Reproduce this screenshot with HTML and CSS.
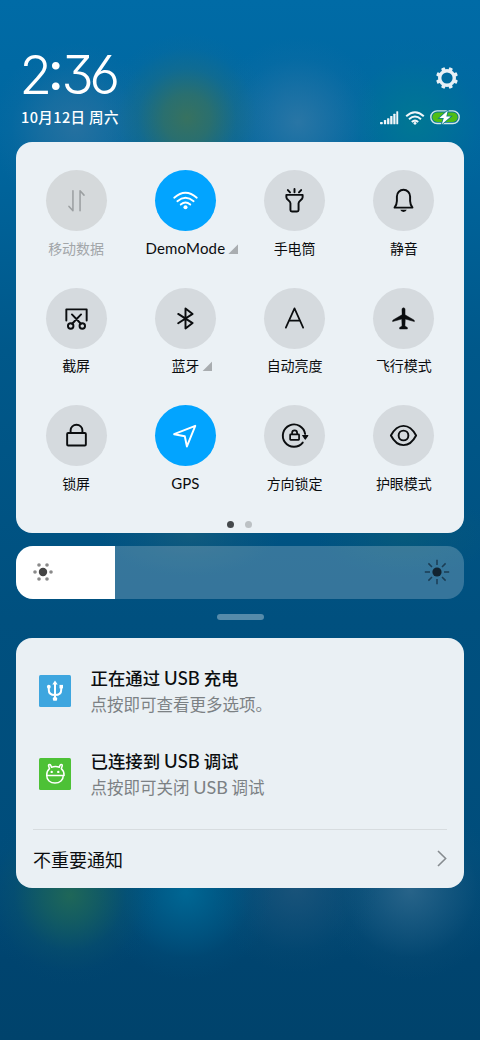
FILE: index.html
```html
<!DOCTYPE html>
<html lang="zh-CN">
<head>
<meta charset="utf-8">
<title>控制中心</title>
<link rel="stylesheet" href="styles.css">
</head>
<body>
<div class="screen">
  <header class="header">
    <div>
      <div class="clock">2<span class="colon">:</span>36</div>
      <div class="date">10月12日 周六</div>
    </div>
    <div class="header-right">
      <svg class="gear" width="24" height="24" viewBox="-12 -12 24 24">
        <g fill="#e8f0f5">
          <path fill-rule="evenodd" d="M0-9a9 9 0 1 0 0 18a9 9 0 1 0 0-18zM0-5.6a5.6 5.6 0 1 1 0 11.2a5.6 5.6 0 1 1 0-11.2z"/>
          <g id="teeth" transform="rotate(22.5)"><rect x="-1.9" y="-11" width="3.8" height="4" rx=".9"/><rect x="-1.9" y="7" width="3.8" height="4" rx=".9"/><rect x="-11" y="-1.9" width="4" height="3.8" rx=".9"/><rect x="7" y="-1.9" width="4" height="3.8" rx=".9"/></g>
          <use href="#teeth" transform="rotate(45)"/>
        </g>
      </svg>
      <div class="status">
        <svg width="19" height="14" viewBox="0 0 19 14" fill="#f2f7fa"><rect x="0" y="11" width="2.8" height="2.3" rx=".7"/><rect x="3.9" y="9" width="2.3" height="4.3" rx=".5"/><rect x="7.1" y="7.2" width="2.3" height="6.1" rx=".5"/><rect x="10.2" y="5" width="2.3" height="8.3" rx=".5"/><rect x="13.3" y="2.8" width="2.2" height="10.5" rx=".5"/><rect x="16.3" y=".3" width="1.9" height="13" rx=".5"/></svg>
        <svg width="20" height="14" viewBox="0 0 20 14" fill="none" stroke="#f2f7fa" stroke-width="2"><path d="M1.2 5.2Q10-2.7 18.8 5.2M4 8.2Q10 2.9 16 8.2M6.8 11Q10 8.3 13.2 11"/><circle cx="10" cy="12.3" r="1.4" fill="#f2f7fa" stroke="none"/></svg>
        <svg width="30" height="15" viewBox="0 0 30 15"><rect x=".8" y=".9" width="28.4" height="12.6" rx="6.3" fill="none" stroke="#d3e8e8" stroke-width="1.4"/><rect x="2.4" y="2.4" width="25.2" height="9.6" rx="4.8" fill="#50bd14"/><path d="M17.8.6L9.4 8h4.4l-2 6.2L20.8 6.4h-4.5z" fill="#fff" stroke="#087b90" stroke-width="1.5" paint-order="stroke"/></svg>
      </div>
    </div>
  </header>

  <main class="panel">
    <div class="tiles">
      <div class="tile off"><div class="disc"><svg viewBox="0 0 60 60"><path d="M26.500 20.500v19.500L22.600 35.800M33.500 40V20.500L37.400 24.700"/></svg></div><div class="label">移动数据</div></div>
      <div class="tile on"><div class="disc"><svg viewBox="0 0 60 60"><path d="M18.900 27.300Q30 17.600 41.100 27.300M22 30.700Q30 23.900 38 30.700M25.300 34Q30 30 34.700 34" stroke-width="1.800"/><circle cx="30" cy="36.600" r="2" fill="#fff" stroke="none"/></svg></div><div class="label more"><span class="latin wide">DemoMode</span></div></div>
      <div class="tile"><div class="disc"><svg viewBox="0 0 60 60"><path d="M22 24.500h16v2.200c0 2.800-4 3.200-4 6v6.600q0 1.500-1.500 1.500h-5q-1.500 0-1.500-1.500v-6.600c0-2.800-4-3.200-4-6zM30 22v-3.300M25.600 22l-2.100-2.300M34.400 22l2.100-2.300"/></svg></div><div class="label">手电筒</div></div>
      <div class="tile"><div class="disc"><svg viewBox="0 0 60 60"><path d="M21.200 37h17.600q-2.300-3.300-2.300-6.500v-4.500a6.500 6.500 0 0 0-13 0v4.500q0 3.200-2.300 6.500z"/><path d="M26.800 39.200h6.400q-.8 2-3.200 2t-3.200-2z" fill="#0b0d0f" stroke="none"/></svg></div><div class="label">静音</div></div>

      <div class="tile"><div class="disc"><svg viewBox="0 0 60 60"><path d="M20 32V21h20v11M25.500 26l8.800 9.200M34.500 26l-8.800 9.200"/><circle cx="24.300" cy="37.300" r="2.700"/><circle cx="35.700" cy="37.300" r="2.700"/></svg></div><div class="label">截屏</div></div>
      <div class="tile"><div class="disc"><svg viewBox="0 0 60 60"><path d="M22.800 25.500L37 34.500l-7 5.300V20.200l7 5.300-14.200 9.200"/></svg></div><div class="label more">蓝牙</div></div>
      <div class="tile"><div class="disc"><svg viewBox="0 0 60 60"><path d="M21.500 39L30 20l8.500 19M24.700 32.200h10.600" stroke-width="1.700"/></svg></div><div class="label">自动亮度</div></div>
      <div class="tile"><div class="disc"><svg viewBox="0 0 60 60"><path d="M28.500 21a1.500 1.500 0 0 1 3 0v5.400l8.700 5q.5.400.5 1v.6l-9-2.500-.3 6.900 2.400 1.500v1.400h-7.600v-1.400l2.400-1.500-.3-6.900-9 2.500v-.6q0-.6.500-1l8.700-5z" fill="#0b0d0f" stroke-width=".5"/></svg></div><div class="label">飞行模式</div></div>

      <div class="tile"><div class="disc"><svg viewBox="0 0 60 60"><rect x="20.800" y="27.500" width="18.400" height="12.300" rx="1"/><path d="M24.200 27v-2.200a5.800 5.300 0 0 1 11.600 0V27"/></svg></div><div class="label">锁屏</div></div>
      <div class="tile on"><div class="disc"><svg viewBox="0 0 60 60"><path d="M39.600 20.500L18.800 28.700l10.500 2.100 2.100 10z"/></svg></div><div class="label"><span class="latin gps">GPS</span></div></div>
      <div class="tile"><div class="disc"><svg viewBox="0 0 60 60"><path d="M38.100 37A11 11 0 1 1 40.400 28.500"/><path d="M38 30h5.200l-2.600 3.600z" fill="#0b0d0f" stroke-width="1"/><rect x="25.700" y="29" width="8.800" height="5.300" rx=".5" stroke-width="1.700"/><path d="M27.600 28.500v-1a2.500 2.500 0 0 1 5 0v1" stroke-width="1.700"/></svg></div><div class="label">方向锁定</div></div>
      <div class="tile"><div class="disc"><svg viewBox="0 0 60 60"><path d="M17.600 30q5-9.500 12.400-9.500t12.400 9.500q-5 9.500-12.400 9.500t-12.400-9.500z"/><circle cx="30" cy="30" r="4.800"/></svg></div><div class="label">护眼模式</div></div>
    </div>
    <div class="pager"><i class="current"></i><i></i></div>
  </main>

  <div class="slider">
    <div class="slider-fill"><svg width="22" height="22" viewBox="-11 -11 22 22"><circle r="4.200" fill="#454545"/><g fill="#8a8a8a"><circle cx="-8" r="1.800"/><circle cx="8" r="1.800"/><circle cx="-4" cy="-7" r="1.800"/><circle cx="4" cy="-7" r="1.800"/><circle cx="-4" cy="7" r="1.800"/><circle cx="4" cy="7" r="1.800"/></g></svg></div>
    <svg width="26" height="26" viewBox="-13 -13 26 26"><circle r="4.600" fill="#122330"/><path d="M0-7v-5.200M0 7v5.200M-7 0h-5.200M7 0h5.200M-5-5l-3.600-3.600M5 5l3.600 3.600M-5 5l-3.600 3.600M5-5l3.600-3.600" stroke="#1b3d54" stroke-width="1.500"/></svg>
  </div>
  <div class="handle"></div>

  <section class="notices">
    <div class="notice">
      <svg class="app" width="32" height="32" viewBox="0 0 32 32"><rect width="32" height="32" rx="1.500" fill="#3ea6df"/><g fill="none" stroke="#fff" stroke-width="2"><path d="M16 9v15M9.800 12.500v2.500q0 5 6.200 5t6.200-5v-3.500"/></g><path d="M16 5.600l2.700 4h-5.400z" fill="#fff"/><circle cx="9.800" cy="11.700" r="1.900" fill="#fff"/><rect x="20.500" y="9.900" width="3.500" height="3.500" fill="#fff"/><rect x="13.900" y="22.300" width="4.200" height="3.500" rx="1" fill="#fff"/></svg>
      <div><h2>正在通过 <span class="latin">USB</span> 充电</h2><p>点按即可查看更多选项。</p></div>
    </div>
    <div class="notice">
      <svg class="app" width="32" height="32" viewBox="0 0 32 32"><rect width="32" height="32" rx="1.500" fill="#4dc136"/><g fill="none" stroke="#fff" stroke-width="1.500" stroke-linecap="round" stroke-linejoin="round"><path d="M7.700 17.400h16.600c0 4.500-3.500 7.700-8.300 7.700s-8.300-3.200-8.300-7.700c0-2.900 1-5.200 2.800-6.700l-.9-2.600q-.3-1.500.8-1.500t1.500 1l.6 1.600q3.900-1.500 7.800 0l.6-1.600q.4-1 1.500-1t.8 1.500l-.9 2.600c1.800 1.500 2.800 3.800 2.800 6.700"/></g><circle cx="12.700" cy="13.900" r="1.200" fill="#fff"/><circle cx="19.300" cy="13.900" r="1.200" fill="#fff"/></svg>
      <div><h2>已连接到 <span class="latin">USB</span> 调试</h2><p>点按即可关闭 <span class="latin">USB</span> 调试</p></div>
    </div>
    <div class="minor"><span>不重要通知</span><svg width="10" height="17" viewBox="0 0 10 17"><path d="M1 1l7.600 7.500L1 16" fill="none" stroke="#868b8f" stroke-width="1.600"/></svg></div>
  </section>
</div>
</body>
</html>
```
FILE: styles.css
```css
* { box-sizing: border-box; }
body { margin: 0; }
.screen {
  width: 480px;
  height: 1040px;
  overflow: hidden;
  padding: 0 16px;
  display: flex;
  flex-direction: column;
  font-family: "Noto Sans CJK SC", sans-serif;
  color: #0b0d0f;
  background:
    radial-gradient(circle 85px at 187px 118px, rgba(58,114,92,.95), rgba(58,114,92,.72) 28%, rgba(48,112,112,.32) 58%, rgba(40,110,130,.08) 82%, transparent),
    radial-gradient(circle 85px at 298px 122px, rgba(48,120,166,.85), rgba(44,118,166,.5) 40%, rgba(40,115,165,.12) 75%, transparent),
    radial-gradient(circle 85px at 75px 128px, rgba(46,115,160,.8), rgba(44,115,160,.5) 40%, rgba(40,112,160,.12) 75%, transparent),
    radial-gradient(circle 85px at 415px 122px, rgba(0,122,145,.85), rgba(0,120,147,.5) 40%, rgba(0,115,152,.12) 75%, transparent),
    radial-gradient(ellipse 90px 42px at 190px 535px, rgba(24,94,124,.7), rgba(24,94,124,.3) 50%, transparent),
    radial-gradient(ellipse 90px 42px at 405px 535px, rgba(10,92,120,.7), rgba(10,92,120,.3) 50%, transparent),
    radial-gradient(circle 90px at 70px 895px, rgba(31,103,88,1), rgba(26,99,92,.72) 30%, rgba(16,88,104,.3) 62%, rgba(10,80,110,.07) 85%, transparent),
    radial-gradient(circle 88px at 186px 892px, rgba(0,103,148,1), rgba(0,100,145,.6) 36%, rgba(0,90,135,.14) 75%, transparent),
    radial-gradient(circle 85px at 296px 888px, rgba(28,84,122,.9), rgba(26,82,120,.5) 40%, rgba(20,80,115,.12) 75%, transparent),
    radial-gradient(circle 90px at 410px 890px, rgba(42,101,138,.95), rgba(36,96,133,.55) 40%, rgba(25,86,122,.13) 75%, transparent),
    linear-gradient(#006ba6 0, #0067a0 130px, #00588a 350px, #00507f 620px, #004d7b 850px, #00446f 960px, #00436c 1040px);
}
.header {
  height: 142px;
  padding: 0 3px 0 5px;
  display: flex;
  justify-content: space-between;
  flex: none;
  color: #fff;
}
.clock {
  margin: 45px 0 0 -1.500px;
  height: 59px;
  font: 300 53px/60px Inter, Lato, sans-serif;
  font-feature-settings: "cv03", "cv09";
  letter-spacing: -4.200px;
}
.colon {
  font-weight: 500;
  line-height: 1;
  vertical-align: 4px;
  letter-spacing: -2.500px;
}
.date {
  height: 26px;
  font-size: 14.5px;
  line-height: 26px;
  font-weight: 500;
  letter-spacing: .4px;
  white-space: nowrap;
}
.header-right {
  padding-top: 66px;
  display: flex;
  flex-direction: column;
  align-items: flex-end;
}
.gear { margin-right: 2px; }
.status {
  margin-top: 20px;
  margin-right: 1px;
  display: flex;
  align-items: center;
  gap: 5.500px;
}
.panel {
  height: 391px;
  flex: none;
  border-radius: 16px;
  padding: 28.300px 5.500px 0;
  background: #ebf1f5;
}
.tiles {
  display: grid;
  grid-template-columns: repeat(4, 1fr);
  grid-auto-rows: 117.300px;
}
.tile {
  display: flex;
  flex-direction: column;
  align-items: center;
}
.disc {
  width: 61px;
  height: 61px;
  border-radius: 50%;
  background: #d5dade;
}
.disc svg {
  display: block;
  width: 61px;
  height: 61px;
  fill: none;
  stroke: #0b0d0f;
  stroke-width: 1.900;
  stroke-linecap: round;
  stroke-linejoin: round;
}
.on .disc { background: #02a4ff; }
.on svg { stroke: #fff; }
.off .disc { background: #d5d9db; }
.off svg { stroke: #9b9fa1; stroke-width: 1.500; }
.off .label { color: #a2a6a9; }
.label {
  height: 24px;
  margin-top: 4.700px;
  display: flex;
  font-size: 14px;
  line-height: 24px;
  white-space: nowrap;
}
.more::after {
  content: "";
  width: 10px;
  height: 10px;
  margin: 8px -13px 0 3px;
  background: #a9adb0;
  clip-path: polygon(100% 0, 100% 100%, 0 100%);
}
.latin { font-family: Lato, sans-serif; }
.wide { font-size: 15px; letter-spacing: .2px; }
.gps { font-size: 15px; }
.pager {
  margin-top: -1.500px;
  margin-right: 1px;
  display: flex;
  justify-content: center;
  gap: 11px;
}
.pager i {
  width: 7px;
  height: 7px;
  border-radius: 50%;
  background: #bcc1c4;
}
.pager .current { background: #45494c; }
.slider {
  height: 53.500px;
  margin-top: 12.500px;
  flex: none;
  border-radius: 17px;
  overflow: hidden;
  display: flex;
  align-items: center;
  justify-content: space-between;
  padding-right: 14px;
  background: rgba(255,255,255,.21);
}
.slider-fill {
  width: 98.800px;
  height: 54px;
  padding-left: 15.500px;
  display: flex;
  align-items: center;
  background: #fff;
}
.handle {
  width: 47px;
  height: 6px;
  flex: none;
  margin: 15px 200.500px 17.500px;
  border-radius: 3px;
  background: #568baa;
}
.notices {
  height: 250.500px;
  flex: none;
  border-radius: 16px;
  padding: 25px 17px 0;
  background: #eaf0f4;
}
.notice {
  height: 83px;
  padding-left: 6px;
  display: flex;
  gap: 19.500px;
}
.app { margin-top: 12.500px; flex: none; }
.notice h2, .notice p {
  margin: 0;
  font-size: 17.400px;
  line-height: 30px;
  white-space: nowrap;
}
.notice h2 { font-weight: 500; }
.notice h2 .latin { font-size: 18.500px; font-weight: 500; }
.notice p { margin-top: -1px; font-size: 16.500px; line-height: 25px; color: #7c8184; }
.notice p .latin { font-size: 18px; }
.minor {
  height: 59px;
  border-top: 1px solid #d7dcdf;
  display: flex;
  align-items: center;
  justify-content: space-between;
  font-size: 18px;
}
```
